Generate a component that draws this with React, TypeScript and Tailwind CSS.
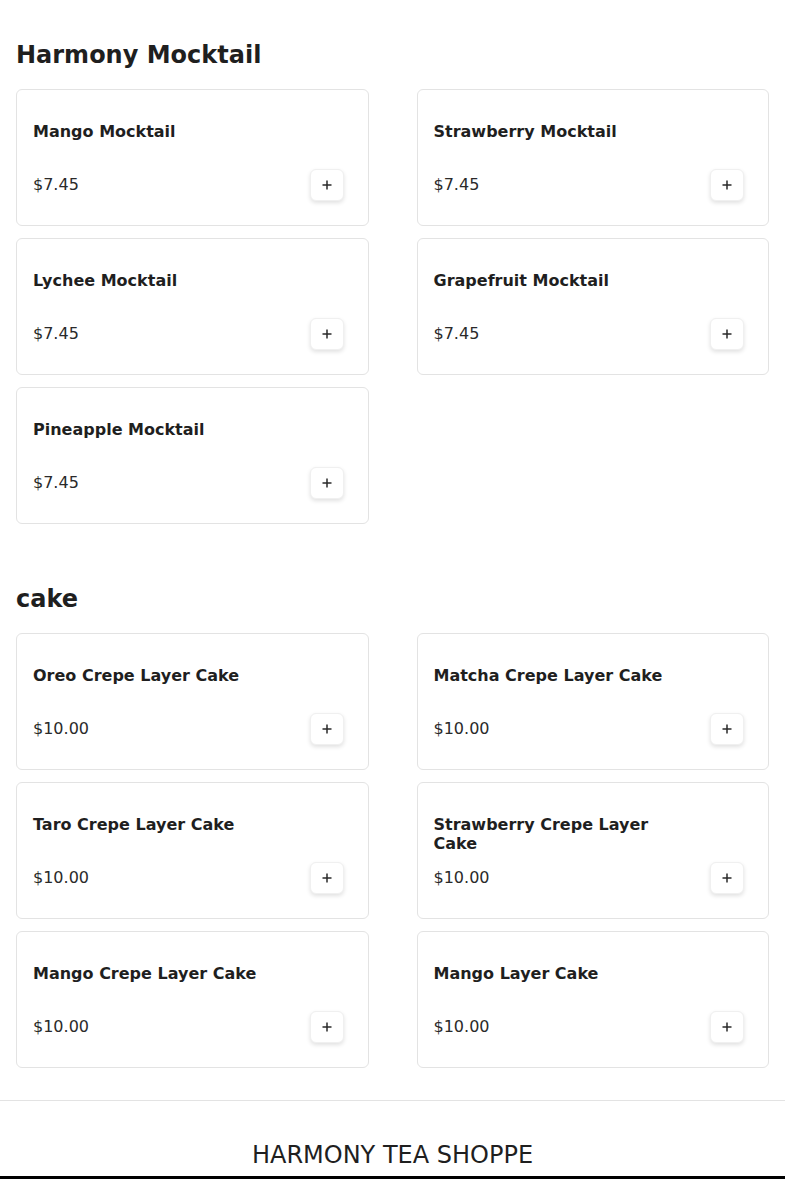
import React from 'react';

type Item = { name: string; price: string };

const sections: { title: string; items: Item[] }[] = [
  {
    title: 'Harmony Mocktail',
    items: [
      { name: 'Mango Mocktail', price: '$7.45' },
      { name: 'Strawberry Mocktail', price: '$7.45' },
      { name: 'Lychee Mocktail', price: '$7.45' },
      { name: 'Grapefruit Mocktail', price: '$7.45' },
      { name: 'Pineapple Mocktail', price: '$7.45' },
    ],
  },
  {
    title: 'cake',
    items: [
      { name: 'Oreo Crepe Layer Cake', price: '$10.00' },
      { name: 'Matcha Crepe Layer Cake', price: '$10.00' },
      { name: 'Taro Crepe Layer Cake', price: '$10.00' },
      { name: 'Strawberry Crepe Layer Cake', price: '$10.00' },
      { name: 'Mango Crepe Layer Cake', price: '$10.00' },
      { name: 'Mango Layer Cake', price: '$10.00' },
    ],
  },
];

function ItemCard({ item }: { item: Item }) {
  return (
    <div className="h-[137px] rounded-md border border-[#e3e3e3] bg-white px-4 pt-8">
      <div className="flex gap-4">
        <div className="min-w-0 flex-1">
          <h3 className="h-[38px] text-base font-bold leading-[19px] text-[#1f1f1f]">{item.name}</h3>
        </div>
        <div className="w-[42px]" />
      </div>
      <div className="mt-[9px] flex h-8 items-center justify-between">
        <span className="text-base leading-6 text-[#2a2a2a]">{item.price}</span>
        <button className="mr-2 flex h-8 w-[34px] items-center justify-center rounded-md border border-[#f0f0f0] bg-white shadow-[0_2px_4px_rgba(0,0,0,0.12)]">
          <svg width="10" height="10" viewBox="0 0 10 10" className="text-[#2a2a2a]">
            <path d="M5 0.5v9M0.5 5h9" stroke="currentColor" strokeWidth="1.5" fill="none" />
          </svg>
        </button>
      </div>
    </div>
  );
}

export default function App() {
  return (
    <div className="min-h-screen bg-white font-['DejaVu_Sans',sans-serif] text-[#1f1f1f]">
      <main className="px-4 pt-[39px]">
        {sections.map((s, i) => (
          <section key={s.title} className={i > 0 ? 'mt-[59px]' : ''}>
            <h2 className="mb-[18px] text-2xl font-bold leading-8">{s.title}</h2>
            <div className="grid grid-cols-2 gap-x-12 gap-y-3">
              {s.items.map(it => (
                <ItemCard key={it.name} item={it} />
              ))}
            </div>
          </section>
        ))}
      </main>

      <footer className="mt-8 border-t border-[#e3e3e3]">
        <p className="pb-[5px] pt-[38px] text-center text-2xl leading-8 text-[#1f1f1f]">HARMONY TEA SHOPPE</p>
        <div className="h-10 bg-black" />
      </footer>
    </div>
  );
}
